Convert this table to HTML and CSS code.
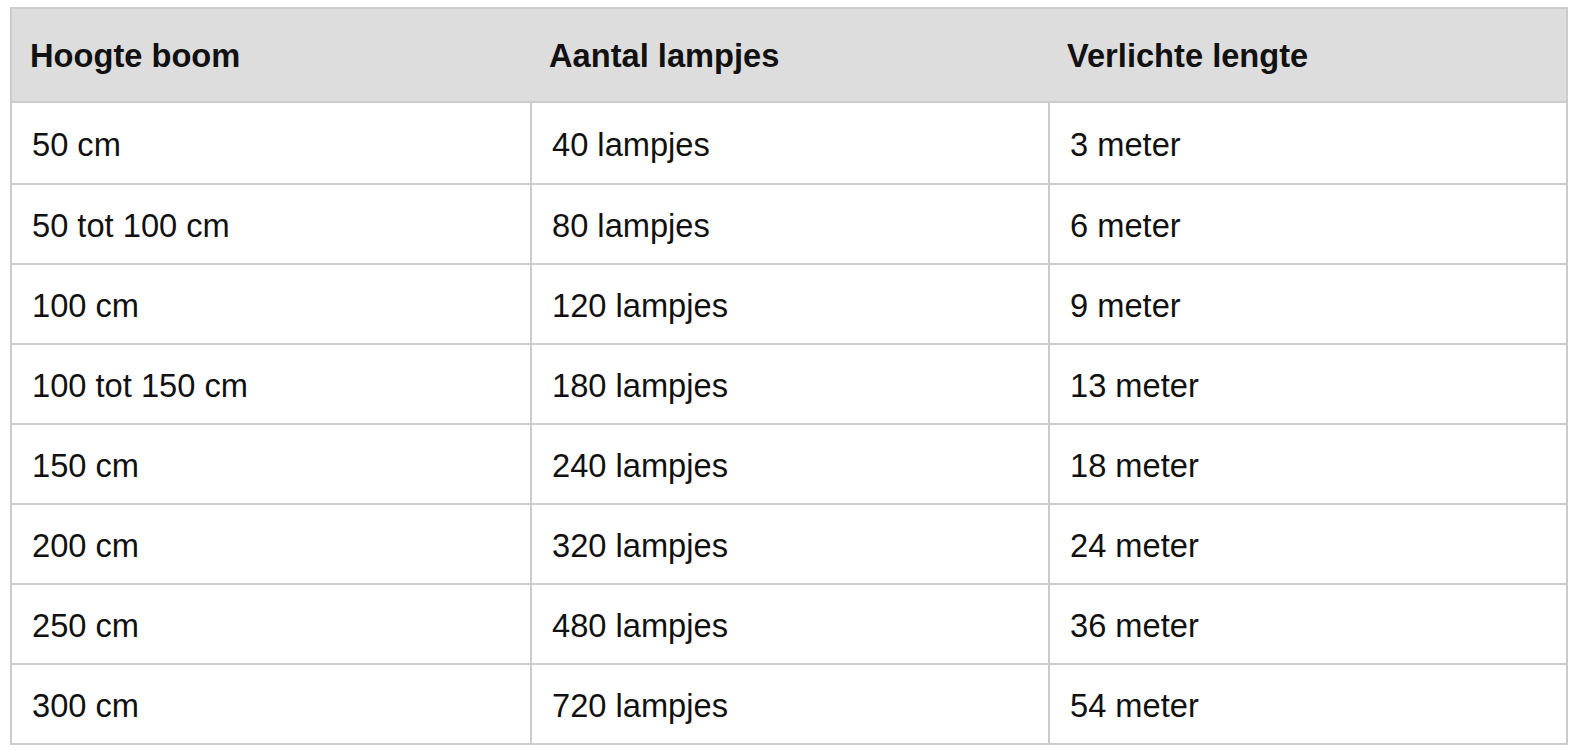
FILE: index.html
```html
<!DOCTYPE html>
<html lang="nl">
<head>
<meta charset="utf-8">
<title>Verlichting kerstboom</title>
<link rel="stylesheet" href="styles.css">
</head>
<body>
<table class="lights">
  <colgroup>
    <col class="c1"><col class="c2"><col class="c3">
  </colgroup>
  <thead>
    <tr><th><span class="t">Hoogte boom</span></th><th><span class="t">Aantal lampjes</span></th><th><span class="t">Verlichte lengte</span></th></tr>
  </thead>
  <tbody>
    <tr class="first"><td><span class="t">50 cm</span></td><td><span class="t">40 lampjes</span></td><td><span class="t">3 meter</span></td></tr>
    <tr><td><span class="t">50 tot 100 cm</span></td><td><span class="t">80 lampjes</span></td><td><span class="t">6 meter</span></td></tr>
    <tr><td><span class="t">100 cm</span></td><td><span class="t">120 lampjes</span></td><td><span class="t">9 meter</span></td></tr>
    <tr><td><span class="t">100 tot 150 cm</span></td><td><span class="t">180 lampjes</span></td><td><span class="t">13 meter</span></td></tr>
    <tr><td><span class="t">150 cm</span></td><td><span class="t">240 lampjes</span></td><td><span class="t">18 meter</span></td></tr>
    <tr><td><span class="t">200 cm</span></td><td><span class="t">320 lampjes</span></td><td><span class="t">24 meter</span></td></tr>
    <tr><td><span class="t">250 cm</span></td><td><span class="t">480 lampjes</span></td><td><span class="t">36 meter</span></td></tr>
    <tr><td><span class="t">300 cm</span></td><td><span class="t">720 lampjes</span></td><td><span class="t">54 meter</span></td></tr>
  </tbody>
</table>
</body>
</html>
```
FILE: styles.css
```css
html, body {
  margin: 0;
  padding: 0;
  background: #ffffff;
}
body {
  padding: 7px 0 0 10px;
  font-family: "Liberation Sans", Arial, sans-serif;
  color: #111111;
}
.lights {
  border-collapse: collapse;
  width: 1556px;
  table-layout: fixed;
  border: 2px solid #cccccc;
  font-size: 34px;
}
.c1 { width: 520px; }
.c2 { width: 518px; }
.c3 { width: 518px; }
.t {
  display: inline-block;
  transform: scaleX(0.96);
  transform-origin: left center;
  white-space: nowrap;
}
.lights th {
  background: #dddddd;
  font-weight: bold;
  text-align: left;
  height: 94px;
  padding: 0 18px;
  box-sizing: border-box;
  vertical-align: middle;
  border-bottom: 2px solid #cccccc;
  line-height: 1.2;
}
.lights td {
  height: 80px;
  padding: 2px 20px 0;
  box-sizing: border-box;
  vertical-align: middle;
  border: 2px solid #cccccc;
  line-height: 1.2;
}
.lights .first td {
  height: 82px;
}
```
